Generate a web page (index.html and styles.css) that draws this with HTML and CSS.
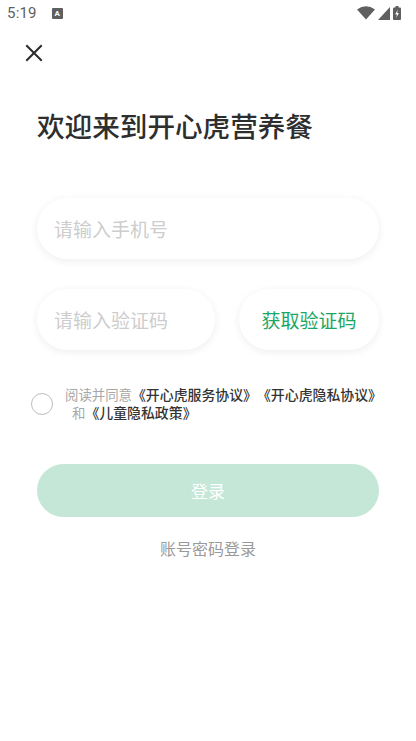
FILE: index.html
```html
<!DOCTYPE html>
<html lang="zh-CN">
<head>
<meta charset="utf-8">
<link rel="stylesheet" href="styles.css">
</head>
<body>
<div class="screen">
  <div class="statusbar">
    <div class="sb-left">
      <span class="time">5:19</span>
      <span class="a-icon">A</span>
    </div>
    <div class="sb-right">
      <svg width="18" height="14" viewBox="0 0 18 14"><path d="M0 3.5 Q9 -3 18 3.5 L9 13.5 Z" fill="#5f5f5f"/></svg>
      <svg width="12" height="13" viewBox="0 0 12 13"><path d="M12 0 L12 13 L0 13 Z" fill="#5f5f5f"/></svg>
      <svg width="8" height="14" viewBox="0 0 8 14"><rect x="2.5" y="0" width="3" height="2" fill="#5f5f5f"/><rect x="0" y="1.5" width="8" height="12.5" rx="1" fill="#5f5f5f"/><path d="M4.8 3.5 L2.2 8.5 L4 8.5 L3.2 12 L5.9 7 L4.1 7 Z" fill="#fff"/></svg>
    </div>
  </div>
  <div class="topbar">
    <svg class="close" width="18" height="18" viewBox="0 0 18 18"><path d="M2 2 L16 16 M16 2 L2 16" stroke="#2b2b2b" stroke-width="2" stroke-linecap="square"/></svg>
  </div>
  <div class="content">
    <h1 class="title">欢迎来到开心虎营养餐</h1>
    <div class="field field-phone">
      <input class="input" type="text" placeholder="请输入手机号">
    </div>
    <div class="code-row">
      <div class="field field-code">
        <input class="input" type="text" placeholder="请输入验证码">
      </div>
      <button class="get-code">获取验证码</button>
    </div>
    <div class="agree">
      <span class="check"></span>
      <div class="agree-text">
        <div class="agree-line"><span class="muted">阅读并同意</span><span class="link">《开心虎服务协议》《开心虎隐私协议》</span></div>
        <div class="agree-line indent"><span class="muted">和</span><span class="link">《儿童隐私政策》</span></div>
      </div>
    </div>
    <button class="login">登录</button>
    <div class="alt-login">账号密码登录</div>
  </div>
</div>
</body>
</html>
```
FILE: styles.css
```css
* { box-sizing: border-box; }
html, body { margin: 0; padding: 0; background: #fff; }
body { font-family: "Noto Sans CJK SC", "Noto Sans", Roboto, sans-serif; color: #333; }
.screen { width: 416px; height: 741px; overflow: hidden; }

.statusbar { height: 26px; display: flex; justify-content: space-between; align-items: center; padding: 0 15px 0 7px; }
.sb-left { display: flex; align-items: center; gap: 15px; }
.time { font-family: Roboto, "Liberation Sans", sans-serif; font-size: 15px; color: #5f5f5f; letter-spacing: 0.2px; }
.a-icon { width: 11px; height: 11px; background: #5f5f5f; color: #fff; font-family: Roboto, sans-serif; font-size: 8px; font-weight: 700; line-height: 11px; text-align: center; border-radius: 1px; }
.sb-right { display: flex; align-items: center; gap: 3px; }

.topbar { height: 54px; display: flex; align-items: center; padding-left: 25px; }
.close { display: block; }

.content { padding: 0 37px 0 37px; }
.title { margin: 26px 0 0 0; font-size: 27.6px; font-weight: 500; line-height: 38px; color: #2e2e2e; letter-spacing: 0; }

.field { height: 61px; border-radius: 31px; background: #fff; box-shadow: 0 2px 9px rgba(0,0,0,0.07); display: flex; align-items: center; }
.field-phone { margin-top: 54px; }
.input { border: none; outline: none; background: transparent; width: 100%; padding: 0 17px; font-family: "Noto Sans CJK SC", sans-serif; font-size: 19px; color: #333; }
.input::placeholder { color: #cdcdcd; }

.code-row { margin-top: 30px; display: flex; gap: 24px; }
.field-code { width: 178px; }
.get-code { flex: 1; height: 61px; border: none; border-radius: 31px; background: #fff; box-shadow: 0 2px 9px rgba(0,0,0,0.07); font-family: "Noto Sans CJK SC", sans-serif; font-size: 19px; color: #1aa765; padding: 0; }

.agree { margin-top: 35px; display: flex; align-items: flex-start; }
.check { width: 22px; height: 22px; border: 1px solid #bdbdbd; border-radius: 50%; flex: none; margin: 8px 0 0 -6px; }
.agree-text { margin: 0 0 0 12px; line-height: 18px; white-space: nowrap; text-spacing-trim: space-all; }
.agree-line { display: flex; align-items: center; height: 18px; }
.link { color: #333; font-weight: 500; font-size: 13.9px; line-height: 18px; text-spacing-trim: space-all; }
.muted { color: #a8a8a8; font-size: 13.4px; line-height: 18px; }
.indent { padding-left: 7px; }

.login { display: block; width: 100%; margin-top: 43px; height: 53px; border: none; border-radius: 27px; background: #c4e7d8; color: #fff; font-family: "Noto Sans CJK SC", sans-serif; font-size: 17px; }
.alt-login { margin-top: 19px; text-align: center; font-size: 16px; color: #9a9a9a; line-height: 24px; }
```
